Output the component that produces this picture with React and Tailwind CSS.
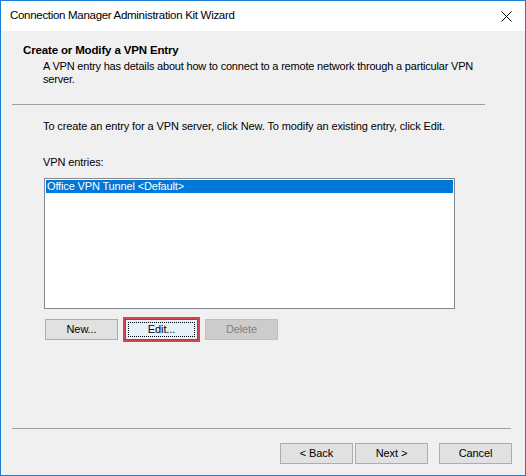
import React from 'react';

// Win32-style push button
const Button = ({ children, disabled, focused, className = '' }) => (
  <button
    type="button"
    className={
      'relative w-[73px] h-[21px] text-[11px] leading-[13px] tracking-[-0.1px] border ' +
      (disabled
        ? 'bg-[#cccccc] border-[#bfbfbf] text-[#838383] '
        : focused
        ? 'bg-[#e5f1fb] border-[#0078d7] text-black outline-2 outline-[#d9424f] '
        : 'bg-[#e1e1e1] border-[#adadad] text-black ') +
      className
    }
  >
    {focused && <span className="absolute inset-[2px] border border-dotted border-black" />}
    <span className="relative">{children}</span>
  </button>
);

const App = () => {
  return (
    <div className="w-[526px] h-[476px] border border-[#1a7fd4] bg-[#f0f0f0] flex flex-col font-['Liberation_Sans',Arial,sans-serif] text-black overflow-hidden">
      {/* Title bar */}
      <div className="h-[30px] bg-white flex items-center justify-between pl-[9px] pr-[13px] shrink-0">
        <span className="text-[11.5px] tracking-[-0.3px]">Connection Manager Administration Kit Wizard</span>
        <svg width="11" height="11" viewBox="0 0 11 11" className="text-black">
          <path d="M0.5 0.5 L10.5 10.5 M10.5 0.5 L0.5 10.5" stroke="currentColor" strokeWidth="1" fill="none" />
        </svg>
      </div>

      {/* Header */}
      <div className="pl-[22px] mt-[12px] text-[11.5px] leading-[14px] tracking-[-0.15px] font-bold">
        Create or Modify a VPN Entry
      </div>
      <div className="pl-[42px] mt-[3px] text-[11px] leading-[13px] tracking-[-0.19px]">
        A VPN entry has details about how to connect to a remote network through a particular VPN
        <br />
        server.
      </div>
      <div className="ml-[11px] w-[473px] mt-[18px] border-t border-[#a0a0a0]" />

      {/* Content */}
      <div className="pl-[42px] mt-[15px] text-[11px] leading-[13px] tracking-[-0.11px]">
        To create an entry for a VPN server, click New. To modify an existing entry, click Edit.
      </div>
      <div className="pl-[42px] mt-[23px] text-[11px] leading-[13px] tracking-[-0.1px]">VPN entries:</div>
      <div className="ml-[43px] mt-[9px] w-[411px] h-[131px] bg-white border border-[#828790] p-px">
        <div className="h-[13px] w-[407px] bg-[#0078d7] text-white text-[11px] leading-[13px] tracking-[-0.15px] pl-[1px]">
          Office VPN Tunnel &lt;Default&gt;
        </div>
      </div>
      <div className="ml-[44px] mt-[10px] flex gap-[7px]">
        <Button>New...</Button>
        <Button focused>Edit...</Button>
        <Button disabled>Delete</Button>
      </div>

      {/* Footer */}
      <div className="mt-auto ml-[11px] w-[499px] border-t border-[#a0a0a0]" />
      <div className="mt-[14px] mb-[11px] flex justify-end pr-[13px]">
        <div className="flex gap-[2px]">
          <Button>&lt; Back</Button>
          <Button>Next &gt;</Button>
        </div>
        <Button className="ml-[11px]">Cancel</Button>
      </div>
    </div>
  );
};

export default App;
